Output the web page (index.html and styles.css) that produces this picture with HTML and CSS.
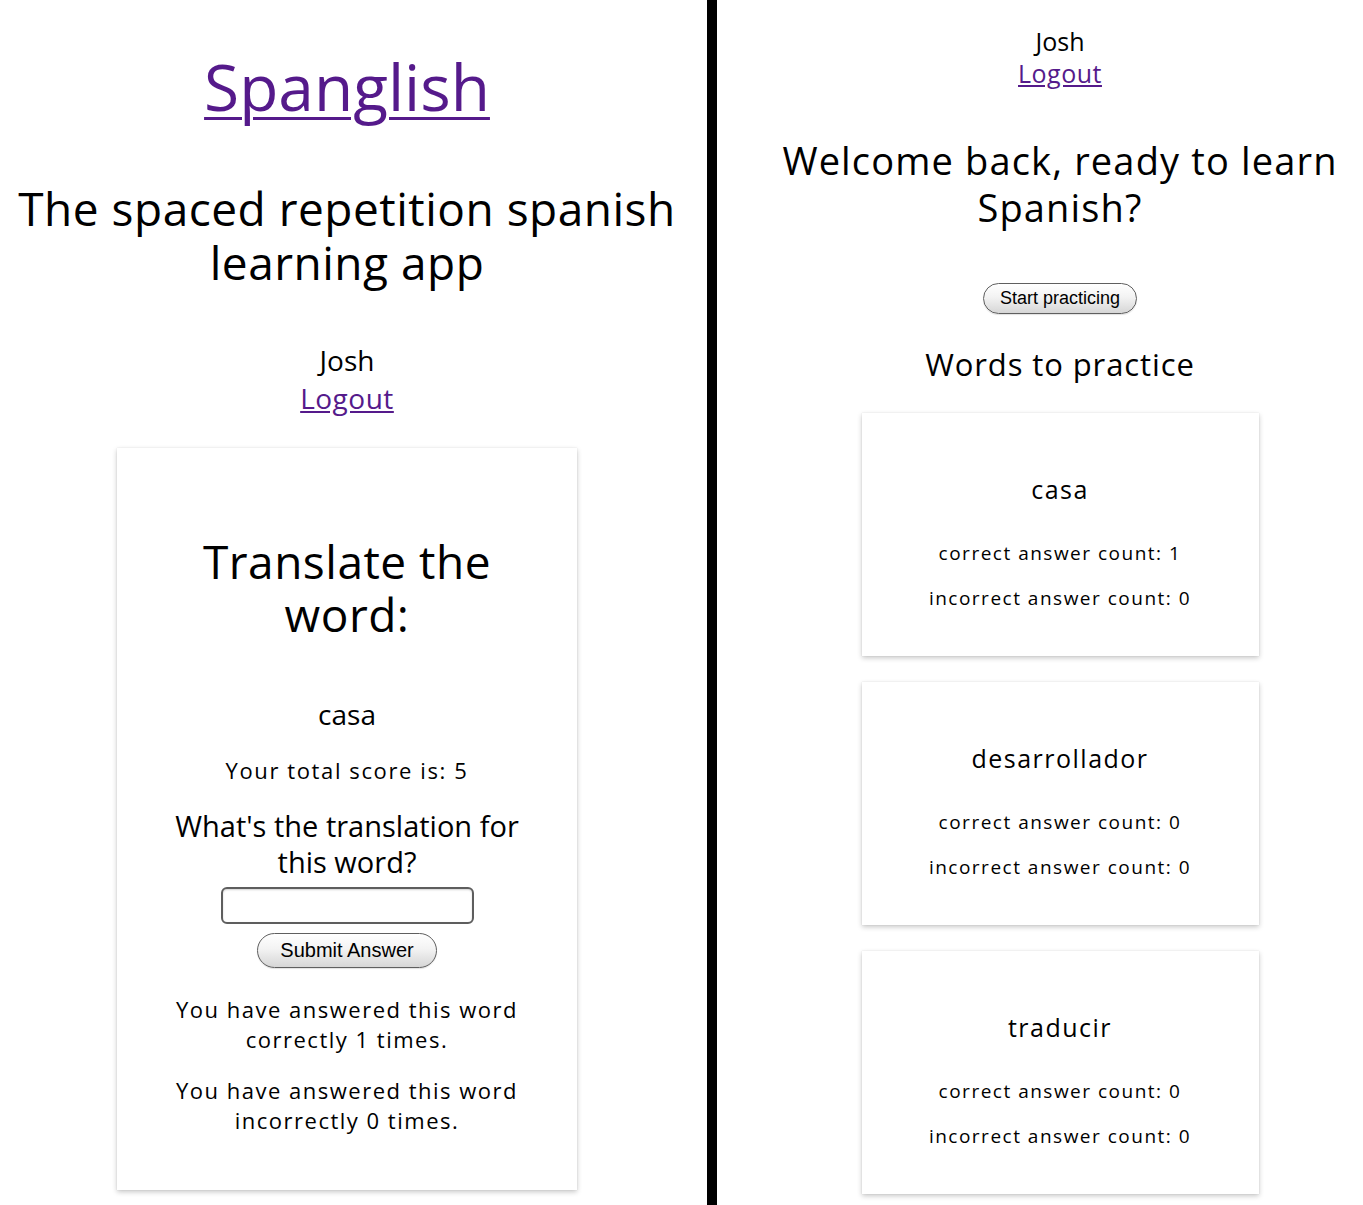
FILE: index.html
```html
<!DOCTYPE html>
<html lang="en">
<head>
<meta charset="utf-8">
<title>Spanglish</title>
<link rel="stylesheet" href="styles.css">
</head>
<body>
<div class="page">
  <section class="left">
    <h1 class="brand"><a href="#">Spanglish</a></h1>
    <h2 class="tagline">The spaced repetition spanish learning app</h2>
    <div class="user user-left">
      <div class="user-name">Josh</div>
      <a class="user-logout" href="#">Logout</a>
    </div>
    <div class="quiz-card">
      <h2 class="quiz-title">Translate the word:</h2>
      <div class="quiz-word">casa</div>
      <p class="quiz-score">Your total score is: 5</p>
      <form class="quiz-form">
        <label class="quiz-label" for="answer">What's the translation for this word?</label>
        <input class="quiz-input" id="answer" type="text">
        <button class="btn btn-submit" type="button">Submit Answer</button>
      </form>
      <p class="quiz-stat">You have answered this word correctly 1 times.</p>
      <p class="quiz-stat quiz-stat-last">You have answered this word incorrectly 0 times.</p>
    </div>
  </section>
  <div class="divider"></div>
  <section class="right">
    <div class="user user-right">
      <div class="user-name">Josh</div>
      <a class="user-logout" href="#">Logout</a>
    </div>
    <h2 class="welcome">Welcome back, ready to learn Spanish?</h2>
    <button class="btn btn-start" type="button">Start practicing</button>
    <h3 class="words-title">Words to practice</h3>
    <ul class="word-list">
      <li class="word-card">
        <h4 class="word-name">casa</h4>
        <p class="word-count">correct answer count: 1</p>
        <p class="word-count">incorrect answer count: 0</p>
      </li>
      <li class="word-card">
        <h4 class="word-name">desarrollador</h4>
        <p class="word-count">correct answer count: 0</p>
        <p class="word-count">incorrect answer count: 0</p>
      </li>
      <li class="word-card">
        <h4 class="word-name">traducir</h4>
        <p class="word-count">correct answer count: 0</p>
        <p class="word-count">incorrect answer count: 0</p>
      </li>
    </ul>
  </section>
</div>
</body>
</html>
```

FILE: styles.css
```css
* { box-sizing: border-box; }

html, body {
  margin: 0;
  padding: 0;
  background: #fff;
  color: #000;
  font-family: "Open Sans", "Noto Sans", sans-serif;
}

.page {
  display: flex;
  height: 1205px;
  overflow: hidden;
}

a { color: #551a8b; }

/* ---------- left ---------- */
.left {
  width: 707px;
  padding-right: 13px;
  display: flex;
  flex-direction: column;
  align-items: center;
  text-align: center;
}

.brand {
  margin: 48px 0 0;
  font-size: 64px;
  font-weight: 400;
  line-height: 77px;
}
.brand a { text-decoration-thickness: 3px; text-underline-offset: 6px; }

.tagline {
  margin: 56px 0 0;
  font-size: 46px;
  font-weight: 400;
  line-height: 54px;
  letter-spacing: 0.5px;
}

.user-left { margin-top: 53px; font-size: 28px; line-height: 37px; }
.user-left .user-logout { display: block; line-height: 38px; letter-spacing: 0.5px; }

.quiz-card {
  margin-top: 31px;
  width: 460px;
  height: 742px;
  padding: 87px 30px 0;
  box-shadow: 0 2px 5px rgba(0, 0, 0, 0.22), 0 0 1px rgba(0, 0, 0, 0.12);
  display: flex;
  flex-direction: column;
  align-items: center;
}

.quiz-title {
  margin: 0;
  font-size: 46px;
  font-weight: 400;
  line-height: 53px;
  letter-spacing: 0.5px;
}

.quiz-word {
  margin-top: 55px;
  font-size: 28px;
  line-height: 37px;
}

.quiz-score {
  margin: 23px 0 0;
  font-size: 22px;
  font-weight: 500;
  line-height: 28px;
  letter-spacing: 1.6px;
}

.quiz-form {
  display: flex;
  flex-direction: column;
  align-items: center;
}

.quiz-label {
  margin-top: 24px;
  font-size: 29px;
  line-height: 36px;
  padding: 0 10px;
}

.quiz-input {
  margin-top: 7px;
  width: 253px;
  height: 37px;
  border: 2px solid #5e5e5e;
  border-radius: 6px;
  box-shadow: inset 0 1px 2px rgba(0, 0, 0, 0.18);
  background: #fff;
  font-size: 18px;
}

.btn {
  font-family: "Liberation Sans", Arial, sans-serif;
  color: #000;
  border: 1.5px solid #5f5f5f;
  background: linear-gradient(#ffffff 0%, #f3f3f3 45%, #d6d6d6 100%);
  box-shadow: 0 1px 1px rgba(0, 0, 0, 0.12);
  cursor: pointer;
  padding: 0;
}

.btn-submit {
  margin-top: 9px;
  width: 180px;
  height: 35px;
  border-radius: 18px;
  font-size: 20px;
}

.quiz-stat {
  margin: 26px 0 0;
  font-size: 22px;
  font-weight: 500;
  line-height: 30px;
  letter-spacing: 1.5px;
}
.quiz-stat-last { margin-top: 21px; }

/* ---------- divider ---------- */
.divider {
  width: 10px;
  flex: none;
  background: #000;
}

/* ---------- right ---------- */
.right {
  flex: 1;
  padding-left: 40px;
  display: flex;
  flex-direction: column;
  align-items: center;
  text-align: center;
}

.user-right { margin-top: 25px; font-size: 25px; line-height: 32px; }
.user-right .user-logout { display: block; letter-spacing: 0.5px; }

.welcome {
  margin: 48px 0 0;
  font-size: 38px;
  font-weight: 400;
  line-height: 47px;
  letter-spacing: 1.15px;
  padding: 0 2px;
}

.btn-start {
  margin-top: 52px;
  width: 154px;
  height: 31px;
  border-radius: 16px;
  font-size: 18px;
}

.words-title {
  margin: 31px 0 0;
  font-size: 31px;
  font-weight: 400;
  line-height: 38px;
  letter-spacing: 0.9px;
}

.word-list {
  list-style: none;
  margin: 30px 0 0;
  padding: 0;
  display: flex;
  flex-direction: column;
  gap: 26px;
}

.word-card {
  width: 397px;
  height: 243px;
  padding-top: 60px;
  box-shadow: 0 2px 5px rgba(0, 0, 0, 0.22), 0 0 1px rgba(0, 0, 0, 0.12);
}

.word-name {
  margin: 0;
  font-size: 25px;
  font-weight: 400;
  line-height: 32px;
  letter-spacing: 1.5px;
}

.word-count {
  margin: 36px 0 0;
  font-size: 19px;
  font-weight: 500;
  line-height: 24px;
  letter-spacing: 1.5px;
}
.word-count + .word-count { margin-top: 21px; }
```
